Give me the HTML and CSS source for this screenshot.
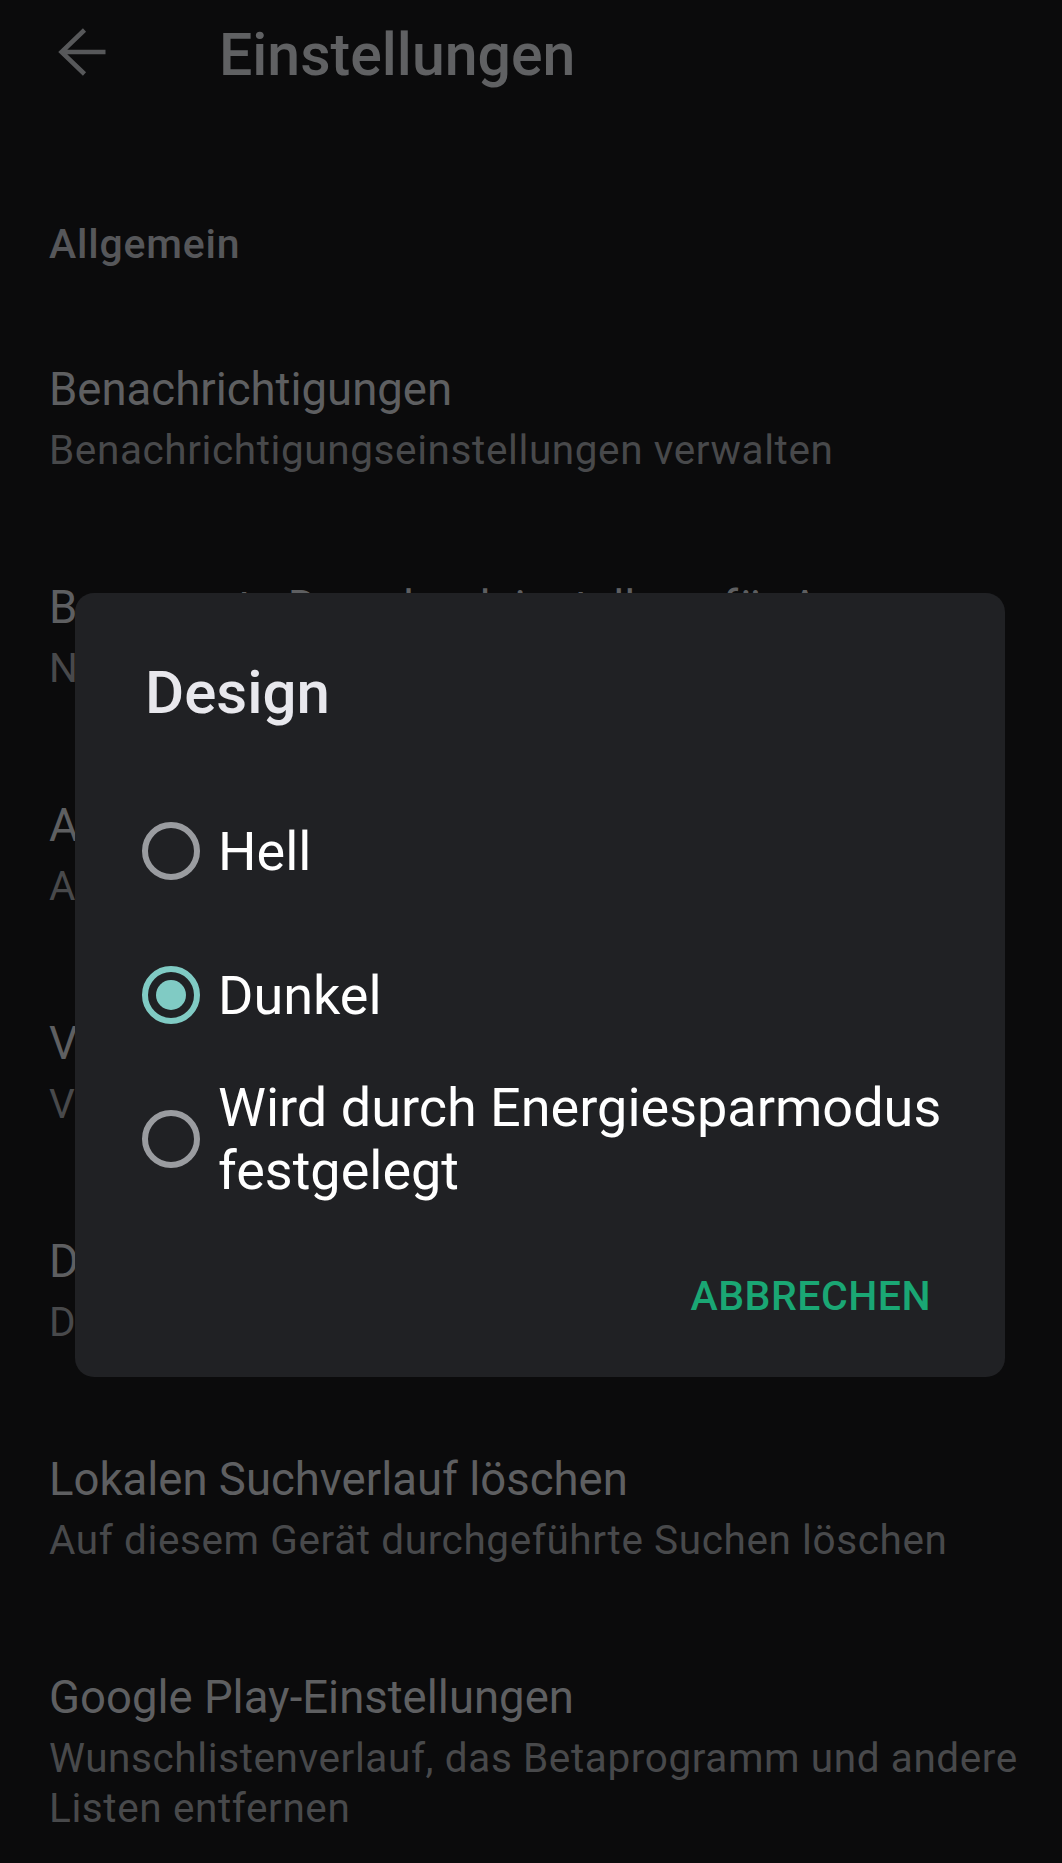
FILE: index.html
```html
<!DOCTYPE html>
<html lang="de">
<head>
    <meta charset="UTF-8">
    <title>Einstellungen</title>
    <link rel="stylesheet" href="styles.css">
</head>
<body>
<div class="screen">
    <div class="toolbar">
        <svg class="back" width="48" height="48" viewBox="0 0 48 48">
            <path d="M2.5 24 H47.5 M26.5 2 L3.5 24 L26.5 46" fill="none" stroke="#57585a" stroke-width="4.5"/>
        </svg>
        <div class="toolbar-title">Einstellungen</div>
    </div>

    <div class="section-title">Allgemein</div>

    <div class="item">
        <div class="item-title">Benachrichtigungen</div>
        <div class="item-sub">Benachrichtigungseinstellungen verwalten</div>
    </div>
    <div class="item">
        <div class="item-title">Bevorzugte Downloadeinstellung für Apps</div>
        <div class="item-sub">Nur über WLAN</div>
    </div>
    <div class="item">
        <div class="item-title">Apps automatisch aktualisieren</div>
        <div class="item-sub">Apps nur über WLAN aktualisieren</div>
    </div>
    <div class="item">
        <div class="item-title">Videos automatisch abspielen</div>
        <div class="item-sub">Videos nur über WLAN automatisch abspielen</div>
    </div>
    <div class="item">
        <div class="item-title">Design</div>
        <div class="item-sub">Dunkel</div>
    </div>
    <div class="item">
        <div class="item-title">Lokalen Suchverlauf löschen</div>
        <div class="item-sub">Auf diesem Gerät durchgeführte Suchen löschen</div>
    </div>
    <div class="item">
        <div class="item-title">Google Play-Einstellungen</div>
        <div class="item-sub">Wunschlistenverlauf, das Betaprogramm und andere Listen entfernen</div>
    </div>

    <div class="dialog">
        <div class="dialog-title">Design</div>
        <div class="options">
            <div class="option">
                <span class="radio"></span>
                <span class="option-text">Hell</span>
            </div>
            <div class="option">
                <span class="radio checked"></span>
                <span class="option-text">Dunkel</span>
            </div>
            <div class="option">
                <span class="radio"></span>
                <span class="option-text">Wird durch Energiesparmodus festgelegt</span>
            </div>
        </div>
        <div class="actions">
            <button class="text-btn">ABBRECHEN</button>
        </div>
    </div>
</div>
</body>
</html>
```

FILE: styles.css
```css
body, html {
    margin: 0;
    height: 100%;
    background: #0b0b0c;
    font-family: Roboto, "Noto Sans", sans-serif;
}
.screen {
    position: relative;
    height: 1863px;
    overflow: hidden;
}
.toolbar {
    display: flex;
    align-items: center;
    height: 104px;
    padding-left: 58px;
}
.back {
    flex-shrink: 0;
}
.toolbar-title {
    margin-left: 113px;
    padding-top: 6px;
    font-size: 59px;
    font-weight: 500;
    line-height: 58px;
    color: #606163;
}
.section-title {
    margin: 115px 0 39px;
    padding-left: 49px;
    font-size: 41px;
    font-weight: 500;
    line-height: 50px;
    letter-spacing: 0.8px;
    color: #56575a;
}
.item {
    padding: 52px 30px 51px 49px;
}
.item-title {
    font-size: 45.5px;
    line-height: 60px;
    color: #5e5f61;
    white-space: nowrap;
}
.item-sub {
    margin-top: 5px;
    font-size: 40.5px;
    line-height: 50px;
    letter-spacing: 0.6px;
    color: #48494b;
}
.dialog {
    position: absolute;
    left: 75px;
    top: 593px;
    width: 930px;
    background: #202124;
    border-radius: 19px;
    padding: 65px 0 56px 0;
}
.dialog-title {
    padding-left: 70px;
    font-size: 60px;
    font-weight: 500;
    line-height: 70px;
    color: #e8e8ed;
}
.options {
    margin-top: 51px;
    padding: 0 30px 0 67px;
}
.option {
    display: flex;
    align-items: center;
    min-height: 144px;
}
.radio {
    flex-shrink: 0;
    width: 58px;
    height: 58px;
    box-sizing: border-box;
    border: 6px solid #9a9ca0;
    border-radius: 50%;
    display: flex;
    align-items: center;
    justify-content: center;
}
.radio.checked {
    border-color: #80cbc4;
}
.radio.checked::after {
    content: "";
    width: 30px;
    height: 30px;
    border-radius: 50%;
    background: #80cbc4;
}
.option-text {
    margin-left: 18px;
    font-size: 54px;
    line-height: 63px;
    color: #ffffff;
}
.actions {
    display: flex;
    justify-content: flex-end;
    margin-top: 60px;
    padding-right: 74px;
}
.text-btn {
    background: none;
    border: none;
    padding: 0;
    font-family: Roboto, "Noto Sans", sans-serif;
    font-size: 41px;
    font-weight: 500;
    line-height: 50px;
    letter-spacing: 0.5px;
    color: #1aa774;
}
```
